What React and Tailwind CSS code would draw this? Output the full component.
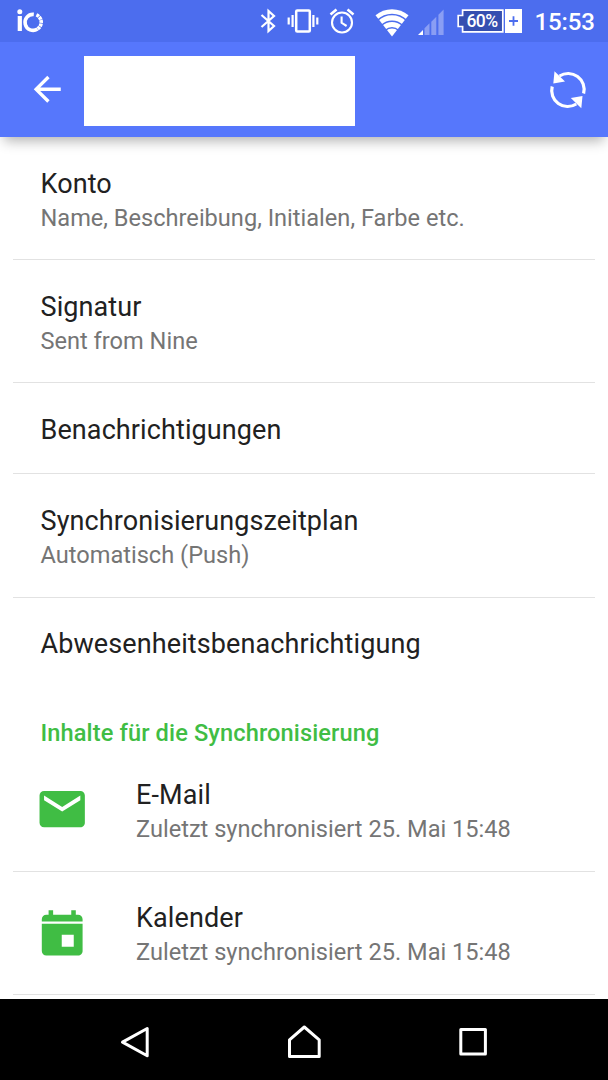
import clsx from "clsx";

const accountSettings = [
  { title: "Konto", subtitle: "Name, Beschreibung, Initialen, Farbe etc.", size: "h-[123px] pt-[29.5px]" },
  { title: "Signatur", subtitle: "Sent from Nine", size: "h-[123px] pt-[29.5px]" },
  { title: "Benachrichtigungen", size: "h-[91px] pt-[30px]" },
  { title: "Synchronisierungszeitplan", subtitle: "Automatisch (Push)", size: "h-[124px] pt-[30px]" },
  { title: "Abwesenheitsbenachrichtigung", size: "h-[91px] pt-[29px]", last: true },
];

const syncContents = [
  { title: "E-Mail", subtitle: "Zuletzt synchronisiert 25. Mai 15:48", icon: MailIcon, size: "h-[124px] pt-[30px]" },
  { title: "Kalender", subtitle: "Zuletzt synchronisiert 25. Mai 15:48", icon: CalendarIcon, size: "h-[123px] pt-[29px]" },
];

function LogoIcon() {
  return (
    <svg width="28" height="26" viewBox="0 0 28 26" fill="none" className="ml-[16px]">
      <circle cx="3.8" cy="3.7" r="2.5" fill="#fff" />
      <rect x="1.7" y="8" width="4.2" height="15" fill="#fff" />
      <path d="M17.8 6.4A8 8 0 1 0 21.5 21" stroke="#fff" strokeWidth="3.6" />
      <path d="M20.4 6.9A8 8 0 0 1 21.5 21" stroke="#fff" strokeWidth="3.6" strokeDasharray="2.9 0.6" />
    </svg>
  );
}

function BluetoothIcon() {
  return (
    <svg width="16" height="26" viewBox="0 0 16 26" fill="none" stroke="#fff" strokeWidth="2.2" className="ml-[215.5px]">
      <path d="M1.5 7 14 18 8.5 23V3l5.500 5L1.500 19" />
    </svg>
  );
}

function VibrateIcon() {
  return (
    <svg width="32" height="26" viewBox="0 0 32 26" fill="none" stroke="#fff" strokeWidth="2.2" className="ml-[11.5px]">
      <rect x="9.2" y="2.5" width="13.6" height="21" rx="1" strokeWidth="2.5" />
      <path d="M5.6 7v12M26.4 7v12M1.7 9.5v7M30.3 9.5v7" />
    </svg>
  );
}

function AlarmIcon() {
  return (
    <svg width="26" height="26" viewBox="0 0 26 26" fill="none" stroke="#fff" strokeWidth="2.1" className="ml-[10px]">
      <circle cx="13" cy="14.5" r="10" />
      <path d="M1.5 6.6 7.5 1.6M24.5 6.6l-6-5" strokeWidth="2.6" />
      <path d="M12.6 8.5v6.3l5 3.2" />
    </svg>
  );
}

function WifiIcon() {
  return (
    <svg width="34" height="28" viewBox="0 0 34 28" className="ml-[20px] mt-[3px]">
      <path d="M17 27.5.5 6.2A25.5 25.5 0 0 1 33.5 6.2z" fill="#fff" />
      <g fill="none" stroke="#4c6dee" strokeWidth="1.5">
        <path d="M2.5 11.4a21 21 0 0 1 29 0" />
        <path d="M6.5 16.3a15.5 15.5 0 0 1 21 0" />
        <path d="M10.5 21.2a9.8 9.8 0 0 1 13 0" />
      </g>
    </svg>
  );
}

function SignalIcon() {
  return (
    <svg width="26" height="26" viewBox="0 0 26 26" className="ml-[9px] mt-px">
      <path d="M0 26l5-5v5z" fill="#fff" />
      <path d="M6.5 26v-6.8l5-5V26zM13.3 26V12.8l5-5V26zM20.4 26V5.7L25.6.5V26z" fill="#8a9ef4" />
    </svg>
  );
}

function Battery() {
  return (
    <div className="relative ml-[13px] h-[24px] w-[65px]">
      <svg width="65" height="24" viewBox="0 0 65 24" fill="none">
        <path d="M5.6 1.2h40.2v21.6H5.6v-5.3H1.2v-11h4.4z" fill="#354fb0" stroke="#fff" strokeWidth="1.7" />
        <rect x="48" y="0" width="17" height="24" fill="#fff" />
        <path d="M52 12h9M56.5 7.2v9.6" stroke="#4c6dee" strokeWidth="1.8" />
      </svg>
      <span className="absolute left-[9.5px] top-0 text-[17.5px] font-medium leading-[24px] tracking-[-0.6px]">60%</span>
    </div>
  );
}

function MailIcon() {
  return (
    <svg width="54.4" height="54.4" viewBox="0 0 24 24" fill="#40bd44">
      <path d="M20 4H4c-1.1 0-2 .9-2 2v12c0 1.1.9 2 2 2h16c1.1 0 2-.9 2-2V6c0-1.1-.9-2-2-2zm0 4-8 5-8-5V6l8 5 8-5z" />
    </svg>
  );
}

function CalendarIcon() {
  return (
    <svg width="54.4" height="54.4" viewBox="0 0 24 24" fill="#40bd44" className="mt-[3px]">
      <path d="M3 6V5c0-1.1.9-2 2-2h1V1h2v2h8V1h2v2h1c1.1 0 2 .9 2 2v1z" />
      <path d="M3 7h18v12c0 1.1-.9 2-2 2H5c-1.1 0-2-.9-2-2zm8.8 4.8v5.3h5.3v-5.3z" fillRule="evenodd" />
    </svg>
  );
}

function StatusBar() {
  return (
    <div className="flex h-[42px] items-center bg-[#4c6dee] text-white">
      <LogoIcon />
      <BluetoothIcon />
      <VibrateIcon />
      <AlarmIcon />
      <WifiIcon />
      <SignalIcon />
      <Battery />
      <span className="ml-[12.5px] mt-[2px] text-[24px] font-medium leading-none tracking-[-0.1px]">15:53</span>
    </div>
  );
}

function AppBar() {
  return (
    <div className="flex h-[95px] items-center bg-[#5677fc]">
      <svg width="40.5" height="40.5" viewBox="0 0 24 24" fill="#fff" className="ml-[27.3px]">
        <path d="M20 11H7.83l5.59-5.59L12 4l-8 8 8 8 1.41-1.41L7.83 13H20v-2z" />
      </svg>
      <div className="ml-[16.7px] mt-[2px] h-[70px] w-[271px] bg-white" />
      <svg width="40" height="40" viewBox="0 0 40 40" className="ml-auto mr-[20px]">
        <path d="M11.5 6A16 16 0 0 1 35.6 23.5M4.2 16.5A16 16 0 0 0 28.3 34" fill="none" stroke="#fff" strokeWidth="3.2" />
        <path d="M6.5 1.2l10.500 10.300L5.300 13.500zM33.300 38.300l-10.500-10.300 11.700-2z" fill="#fff" />
      </svg>
    </div>
  );
}

function SettingRow({ title, subtitle, icon: Icon, size, last }) {
  return (
    <div className={clsx("mx-[13px] flex border-[#e2e2e2] pl-[27.5px]", size, !last && "border-b")}>
      {Icon && (
        <div className="-ml-[5.5px] mt-[4px] w-[101px] shrink-0">
          <Icon />
        </div>
      )}
      <div className="whitespace-nowrap">
        <p className="text-[27px] leading-[34px] tracking-[0.1px] text-[#212121]">{title}</p>
        {subtitle && <p className="text-[23.6px] leading-[34px] text-[#757575]">{subtitle}</p>}
      </div>
    </div>
  );
}

function NavBar() {
  return (
    <div className="flex h-[81px] shrink-0 items-center bg-black pt-[5px]">
      <svg width="30" height="34" viewBox="0 0 30 34" fill="none" stroke="#fff" strokeWidth="3" strokeLinejoin="round" className="ml-[120px]">
        <path d="M27.2 3.5v27.2L2.5 17.1z" />
      </svg>
      <svg width="34" height="34" viewBox="0 0 34 34" fill="none" stroke="#fff" strokeWidth="3" strokeLinejoin="round" className="ml-[137px]">
        <path d="M17.3 2 32.2 14.8v16.7H2.5V14.8z" />
      </svg>
      <svg width="30" height="30" viewBox="0 0 30 30" fill="none" stroke="#fff" strokeWidth="3" strokeLinejoin="round" className="ml-[137px]">
        <rect x="2.8" y="2.5" width="24.6" height="24.6" />
      </svg>
    </div>
  );
}

export default function App() {
  return (
    <div className="flex h-[1080px] w-[608px] flex-col overflow-hidden bg-white font-['Roboto',sans-serif]">
      <header className="relative z-10 shrink-0 shadow-[0_8px_12px_-4px_rgba(0,0,0,0.3)]">
        <StatusBar />
        <AppBar />
      </header>

      <main className="flex-1 overflow-hidden">
        {accountSettings.map((item) => (
          <SettingRow key={item.title} {...item} />
        ))}

        {/* Section header */}
        <h2 className="h-[59px] pl-[40.5px] pt-[27px] text-[23.6px] font-medium leading-[34px] tracking-[0.12px] text-[#40bd44]">
          Inhalte für die Synchronisierung
        </h2>

        {syncContents.map((item) => (
          <SettingRow key={item.title} {...item} />
        ))}
      </main>

      <NavBar />
    </div>
  );
}
